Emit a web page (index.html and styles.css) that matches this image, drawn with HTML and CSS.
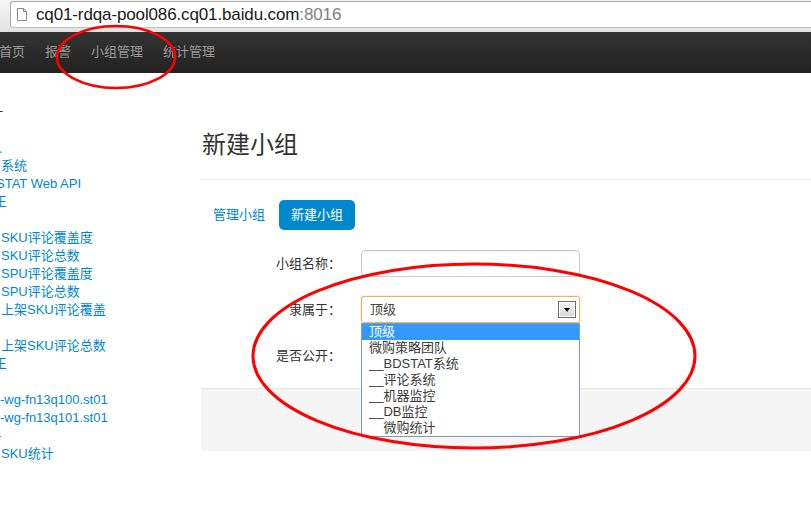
FILE: index.html
```html
<!DOCTYPE html>
<html lang="zh-CN">
<head>
<meta charset="utf-8">
<title>新建小组</title>
<link rel="stylesheet" href="styles.css">
</head>
<body>
<div class="chrome">
  <div class="urlbar">
    <svg class="page-icon" width="10" height="13" viewBox="0 0 10 13"><path d="M0.5 0.5 H6.5 L9.5 3.5 V12.5 H0.5 Z M6.5 0.5 V3.5 H9.5" fill="#fff" stroke="#8a8a8a" stroke-width="1"/></svg>
    <span class="url">cq01-rdqa-pool086.cq01.baidu.com<span class="port">:8016</span></span>
  </div>
</div>
<nav class="navbar">
  <a class="nav-link first">首页</a>
  <a class="nav-link">报警</a>
  <a class="nav-link">小组管理</a>
  <a class="nav-link">统计管理</a>
</nav>
<div class="layout">
  <aside class="sidebar">
    <div class="line"><span class="cut cut-dark">一</span></div>
    <div class="line"></div>
    <div class="line"><span class="cut cut-ren">人</span></div>
    <div class="line">系统</div>
    <div class="line"><span class="shift-s">STAT Web API</span></div>
    <div class="line"><span class="cut cut-wang">王</span></div>
    <div class="line"></div>
    <div class="line">SKU评论覆盖度</div>
    <div class="line">SKU评论总数</div>
    <div class="line">SPU评论覆盖度</div>
    <div class="line">SPU评论总数</div>
    <div class="line">上架SKU评论覆盖</div>
    <div class="line"></div>
    <div class="line">上架SKU评论总数</div>
    <div class="line"><span class="cut cut-wang">王</span></div>
    <div class="line"></div>
    <div class="line"><span class="shift-h">-wg-fn13q100.st01</span></div>
    <div class="line"><span class="shift-h">-wg-fn13q101.st01</span></div>
    <div class="line"><span class="cut cut-dot">-</span></div>
    <div class="line">SKU统计</div>
  </aside>
  <main class="main">
    <div class="page-header"><h1>新建小组</h1></div>
    <ul class="pills">
      <li><a class="pill">管理小组</a></li>
      <li><a class="pill active">新建小组</a></li>
    </ul>
    <form class="form">
      <div class="group">
        <label class="control-label">小组名称：</label>
        <div class="controls"><input class="text-input" type="text"></div>
      </div>
      <div class="group">
        <label class="control-label">隶属于：</label>
        <div class="controls">
          <div class="select">顶级<span class="arrow"></span></div>
          <ul class="dropdown">
            <li class="opt selected">顶级</li>
            <li class="opt">微购策略团队</li>
            <li class="opt">__BDSTAT系统</li>
            <li class="opt">__评论系统</li>
            <li class="opt">__机器监控</li>
            <li class="opt">__DB监控</li>
            <li class="opt"><span class="hidden-ind">__</span>微购统计</li>
          </ul>
        </div>
      </div>
      <div class="group">
        <label class="control-label">是否公开：</label>
        <div class="controls"></div>
      </div>
      <div class="actions"></div>
    </form>
  </main>
</div>
<svg class="marks" width="811" height="531" viewBox="0 0 811 531">
  <ellipse cx="116" cy="57" rx="59" ry="31" fill="none" stroke="#ff0000" stroke-width="2.6"/>
  <ellipse cx="474" cy="356" rx="221" ry="92" fill="none" stroke="#ff0000" stroke-width="3"/>
</svg>
</body>
</html>
```
FILE: styles.css
```css
html, body {
  margin: 0;
  padding: 0;
  background: #fff;
}
body {
  width: 811px;
  height: 531px;
  overflow: hidden;
  position: relative;
  font-family: "Liberation Sans", "Noto Sans CJK SC", sans-serif;
  font-size: 13px;
  color: #333;
}

/* browser chrome */
.chrome {
  height: 32px;
  box-sizing: border-box;
  padding: 1px 0 4px 10px;
  background: linear-gradient(to bottom, #f6f6f6, #e2e2e2);
}
.urlbar {
  height: 27px;
  box-sizing: border-box;
  border: 1px solid #a8a8a8;
  border-bottom-color: #c2c2c2;
  border-right: none;
  border-radius: 3px 0 0 3px;
  background: #fff;
  display: flex;
  align-items: flex-start;
}
.page-icon {
  display: block;
  margin: 6px 0 0 6px;
}
.url {
  margin-left: 9px;
  font-family: "Liberation Sans", sans-serif;
  font-size: 17px;
  letter-spacing: -0.13px;
  line-height: 25px;
  color: #1a1a1a;
  white-space: nowrap;
}
.port {
  color: #808080;
}

/* navbar */
.navbar {
  height: 41px;
  background: linear-gradient(to bottom, #333333, #222222);
  display: flex;
  align-items: flex-start;
}
.nav-link {
  display: block;
  padding: 0 10px;
  line-height: 39px;
  color: #999;
  font-size: 13px;
  white-space: nowrap;
}
.nav-link.first {
  margin-left: -11px;
}

/* layout */
.layout {
  display: flex;
}
.sidebar {
  width: 201px;
  flex: none;
  overflow: hidden;
  padding-top: 30px;
  box-sizing: border-box;
}
.line {
  height: 18px;
  line-height: 18px;
  padding-left: 1px;
  color: #0088cc;
  white-space: nowrap;
  overflow: visible;
}
.cut {
  display: inline-block;
}
.cut-dark {
  color: #333;
  margin-left: -11px;
}
.cut-ren {
  margin-left: -12px;
}
.cut-wang {
  margin-left: -7px;
}
.cut-dot {
  margin-left: -4px;
}
.shift-s {
  display: inline-block;
  margin-left: -5px;
}
.shift-h {
  display: inline-block;
  margin-left: -1px;
}

/* main */
.main {
  flex: 1;
  min-width: 0;
}
.page-header {
  margin-top: 55px;
  padding-bottom: 21px;
  border-bottom: 1px solid #eeeeee;
}
.page-header h1 {
  margin: 0;
  padding-left: 1px;
  font-family: "Noto Sans CJK SC", sans-serif;
  font-size: 24px;
  font-weight: 400;
  line-height: 30px;
  color: #333;
}
.pills {
  list-style: none;
  margin: 20px 0 0;
  padding: 0;
  display: flex;
}
.pill {
  display: block;
  padding: 8px 12px;
  margin-right: 2px;
  line-height: 14px;
  font-size: 13px;
  color: #0088cc;
  border-radius: 5px;
}
.pill.active {
  background: #0088cc;
  color: #fff;
}

/* form */
.form {
  margin: 20px 0 0;
}
.group {
  display: flex;
  height: 27px;
  margin-bottom: 19px;
}
.control-label {
  width: 140px;
  flex: none;
  text-align: right;
  line-height: 27px;
  font-size: 13px;
  color: #333;
}
.controls {
  position: relative;
  margin-left: 20px;
}
.text-input {
  display: block;
  width: 219px;
  height: 27px;
  box-sizing: border-box;
  margin: 0;
  padding: 4px 6px;
  border: 1px solid #cccccc;
  border-radius: 4px;
  box-shadow: inset 0 1px 1px rgba(0, 0, 0, 0.075);
  background: #fff;
}
.select {
  position: relative;
  width: 219px;
  height: 27px;
  box-sizing: border-box;
  padding-left: 8px;
  border: 1px solid #e2b865;
  border-radius: 3px;
  box-shadow: 0 0 2px rgba(236, 180, 80, 0.7);
  line-height: 25px;
  font-size: 13px;
  color: #444;
  background: #fff;
}
.arrow {
  position: absolute;
  right: 3px;
  top: 4px;
  width: 18px;
  height: 17px;
  box-sizing: border-box;
  border: 1px solid #6e6e6e;
  background: linear-gradient(to bottom, #f4f4f4, #d8d8d8);
  box-shadow: inset 0 0 0 1px #fff;
}
.arrow::after {
  content: "";
  position: absolute;
  left: 5px;
  top: 6px;
  border-left: 3px solid transparent;
  border-right: 3px solid transparent;
  border-top: 4px solid #000;
}
.dropdown {
  position: absolute;
  left: 0;
  top: 27px;
  width: 219px;
  box-sizing: border-box;
  margin: 0;
  padding: 0;
  list-style: none;
  background: #fff;
  border: 1px solid #7f9db9;
  z-index: 5;
  overflow: hidden;
}
.opt {
  height: 16px;
  line-height: 16px;
  padding-left: 7px;
  font-size: 13px;
  color: #3a3a3a;
  white-space: nowrap;
}
.opt.selected {
  background: #3399ff;
  color: #fff;
}
.hidden-ind {
  color: transparent;
}
.actions {
  height: 62px;
  border-top: 1px solid #e5e5e5;
  background: #f5f5f5;
}

/* hand-drawn marks over the screenshot */
.marks {
  position: absolute;
  left: 0;
  top: 0;
  pointer-events: none;
  z-index: 10;
}
```
